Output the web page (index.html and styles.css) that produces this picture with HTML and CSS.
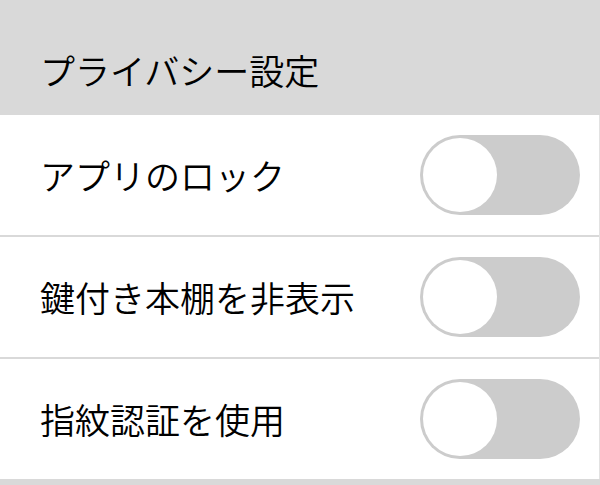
FILE: index.html
```html
<!DOCTYPE html>
<html lang="ja">
<head>
<meta charset="utf-8">
<link rel="stylesheet" href="styles.css">
</head>
<body>
<div class="screen">
  <div class="section-header">プライバシー設定</div>
  <div class="list">
    <div class="row">
      <span class="label">アプリのロック</span>
      <span class="toggle"><span class="knob"></span></span>
    </div>
    <div class="row">
      <span class="label">鍵付き本棚を非表示</span>
      <span class="toggle"><span class="knob"></span></span>
    </div>
    <div class="row">
      <span class="label">指紋認証を使用</span>
      <span class="toggle"><span class="knob"></span></span>
    </div>
  </div>
  <div class="footer"></div>
</div>
</body>
</html>
```
FILE: styles.css
```css
html, body {
  margin: 0;
  padding: 0;
  background: #d9d9d9;
}
.screen {
  width: 600px;
  height: 485px;
  display: flex;
  flex-direction: column;
  font-family: "Noto Sans CJK JP", "Noto Sans", sans-serif;
  font-weight: 350;
  color: #000;
  overflow: hidden;
}
.section-header {
  height: 115px;
  box-sizing: border-box;
  background: #d9d9d9;
  font-size: 35px;
  line-height: 40px;
  padding: 50px 0 0 40px;
}
.list {
  background: #fff;
  border-right: 1px solid #e2e2e2;
}
.row {
  height: 120px;
  display: flex;
  align-items: center;
  justify-content: space-between;
  padding: 0 19px 0 40px;
  border-bottom: 2px solid #d9d9d9;
}
.row:last-child {
  border-bottom: none;
}
.label {
  font-size: 35px;
  line-height: 40px;
}
.toggle {
  width: 160px;
  height: 80px;
  border-radius: 40px;
  background: #cccccc;
  display: flex;
  align-items: center;
  padding: 0 3px;
  box-sizing: border-box;
}
.knob {
  width: 74px;
  height: 74px;
  border-radius: 50%;
  background: #fff;
}
.footer {
  flex: 1;
  background: #d9d9d9;
}
```
